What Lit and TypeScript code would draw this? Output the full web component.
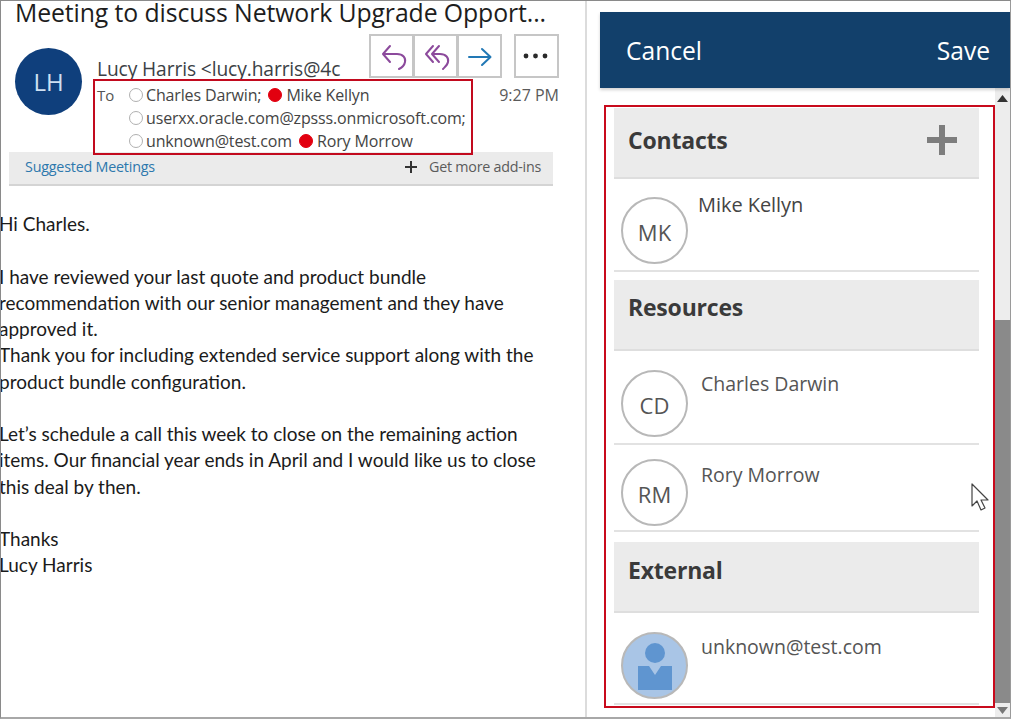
import { LitElement, html, css, svg } from "lit";
import { customElement } from "lit/decorators.js";

const replyIcon = svg`<path d="M19 10 L12 18 L19 26 M12 18 H26 C32 18 35 22 34 26 C33.5 29 31 31.5 28 33"/>`;
const replyAllIcon = svg`<path d="M18 10 L11 18 L18 26 M24 10 L17 18 L24 26 M17 18 H25 C31 18 34 22 33 26 C32.5 29 30 31 28 33"/>`;
const forwardIcon = svg`<path d="M10 21 H31 M23 13 L31.5 21 L23 29"/>`;

@customElement("app-root")
export class AppRoot extends LitElement {
  static styles = css`
    :host { display: block; width: 1015px; height: 722px; background: #fff; overflow: hidden; font-family: "Open Sans", "Noto Sans", sans-serif; color: #333; }
    .frame { position: relative; box-sizing: border-box; width: 1011px; height: 719px; border-top: 1px solid #8a8a8a; border-left: 1px solid #8a8a8a; border-right: 1px solid #9a9a9a; border-bottom: 2px solid #a8a8a8; display: flex; overflow: hidden; background: #fff; }
    .left { width: 584px; flex: none; height: 100%; border-right: 2px solid #dcdcdc; overflow: hidden; }
    .title { height: 33px; margin: 0 0 0 14px; font-size: 24.8px; line-height: 22px; color: #1d1d1d; white-space: nowrap; letter-spacing: -0.1px; }
    .head { display: flex; margin-left: 14px; width: 544px; }
    .lh { flex: none; width: 67px; height: 67px; margin-top: 14px; border-radius: 50%; background: #0f3f7c; color: #cfe0f2; font-size: 24px; display: flex; align-items: center; justify-content: center; }
    .head-main { flex: 1; margin-left: 11px; min-width: 0; }
    .sender-row { display: flex; height: 45px; position: relative; }
    .sender { white-space: nowrap; font-size: 19.2px; line-height: 24px; margin: 23px 0 0 4px; height: 22px; color: #3b3f45; letter-spacing: -0.1px; }
    .actions { display: flex; height: 44px; position: absolute; left: 277px; top: 0; }
    .btn { box-sizing: border-box; width: 45px; height: 44px; border: 2px solid #c6c6c6; margin-left: -1px; background: #fff; }
    .btn svg { display: block; width: 41px; height: 40px; overflow: visible; fill: none; stroke-width: 2; stroke-linecap: round; stroke-linejoin: round; }
    .purple svg { stroke: #8c4a9c; }
    .blue svg { stroke: #2278b5; }
    .more { margin-left: 12px; }
    .more svg { fill: #2a2a2a; stroke: none; }
    .to-row { display: flex; align-items: flex-start; justify-content: space-between; }
    .to-box { position: relative; z-index: 1; box-sizing: border-box; width: 380px; height: 76px; border: 2px solid #c20a1e; padding: 3px 0 0 2px; display: grid; grid-template-columns: 32px 1fr; grid-auto-rows: 23px; font-size: 16px; line-height: 23px; color: #444; }
    .to-label { color: #555; font-size: 15px; }
    .rec { display: flex; align-items: center; grid-column: 2; white-space: nowrap; letter-spacing: -0.15px; }
    .dot { flex: none; box-sizing: border-box; width: 14px; height: 14px; border-radius: 50%; margin: 0 3px 2px 0; border: 1.5px solid #b0b0b0; background: #fff; }
    .dot.filled { background: #e2000f; border-color: #e2000f; margin: 0 4px 2px 0; }
    .sep { display: inline-block; width: 7px; }
    .time { font-size: 16px; line-height: 20px; color: #5a5a5a; margin-top: 6px; }
    .addins { margin: -3px 0 0 8px; box-sizing: border-box; width: 544px; height: 34px; background: #ebebeb; border-bottom: 2px solid #d4d4d4; display: flex; align-items: center; justify-content: space-between; padding: 0 12px 3px 16px; font-size: 14.3px; }
    .suggest { color: #2d78ad; letter-spacing: -0.2px; }
    .more-addins { color: #5b5b5b; display: flex; align-items: center; gap: 12px; letter-spacing: -0.25px; }
    .plus-s { width: 12px; height: 12px; display: block; fill: #333; }
    .mail { margin: 25px 0 0 -2px; font-family: "Lato", "Open Sans", sans-serif; font-size: 19px; line-height: 26.25px; color: #1b1b1b; white-space: nowrap; }
    .mail p { margin: 0 0 26.25px; }
    .right { flex: 1; min-width: 0; height: 100%; display: flex; flex-direction: column; padding-top: 11px; box-sizing: border-box; }
    .bar { flex: none; margin-left: 13px; height: 76px; background: #12406b; color: #fff; font-size: 24.6px; display: flex; align-items: center; justify-content: space-between; padding: 0 20px 0 26px; box-shadow: 0 2px 3px rgba(0,0,0,.18); position: relative; z-index: 1; }
    .under { flex: 1; min-height: 0; display: flex; margin-left: 17px; }
    .red-wrap { flex: 1; min-width: 0; padding-top: 17px; }
    .panel { box-sizing: border-box; height: 603px; border: 2px solid #c80a1c; padding: 1px 14px 0 8px; }
    .sec { box-sizing: border-box; height: 71px; background: #ebebeb; border-bottom: 2px solid #dedede; padding: 11px 21px 0 14px; font-size: 23px; font-weight: 700; line-height: 34px; color: #3a3a3a; display: flex; justify-content: space-between; letter-spacing: -0.2px; }
    .sec.first { padding-top: 15px; }
    .sec.gap { margin-top: 8px; padding-top: 10px; }
    .sec.gap2 { margin-top: 10px; }
    .plus { width: 32px; height: 32px; display: block; fill: #7d7d7d; margin-top: 1px; }
    .row { box-sizing: border-box; border-bottom: 2px solid #e2e2e2; display: flex; align-items: flex-start; padding-left: 7px; }
    .av { flex: none; box-sizing: border-box; width: 67px; height: 67px; border-radius: 50%; border: 2px solid #b8b8b8; display: flex; align-items: center; justify-content: center; font-size: 22px; color: #555; padding-top: 2px; }
    .av.person { background: #a9c5e6; padding: 0; }
    .av.person svg { width: 63px; height: 63px; display: block; fill: #5f95d0; }
    .nm { margin-left: 12px; font-size: 19.5px; line-height: 26px; color: #555; white-space: nowrap; }
    .nm.strong { font-size: 20px; color: #444; letter-spacing: -0.05px; }
    .sb { flex: none; width: 15px; background: #ededed; display: flex; flex-direction: column; }
    .arrow { flex: none; height: 14px; display: flex; align-items: center; justify-content: center; }
    .arrow svg { width: 11px; height: 7px; display: block; }
    .space { flex: none; height: 215px; }
    .thumb { flex: 1; background: #8a8a8a; }
    .cursor { position: absolute; left: 968px; top: 481px; width: 20px; height: 30px; fill: #fff; stroke: #444; stroke-width: 1.2; stroke-linejoin: round; }
  `;

  private row(initials: string, name: string, h: number, avTop: number, nameTop: number, nameGap = 12, strong = false) {
    return html`<div class="row" style="height:${h}px;padding-top:${avTop}px">
      <div class="av">${initials}</div>
      <div class="nm ${strong ? "strong" : ""}" style="margin-top:${nameTop}px;margin-left:${nameGap}px">${name}</div>
    </div>`;
  }

  render() {
    return html`
      <div class="frame">
        <section class="left">
          <div class="title">Meeting to discuss Network Upgrade Opport...</div>
          <div class="head">
            <div class="lh">LH</div>
            <div class="head-main">
              <div class="sender-row">
                <div class="sender">Lucy Harris &lt;lucy.harris@4c</div>
                <div class="actions">
                  <div class="btn purple"><svg viewBox="0 0 41 40">${replyIcon}</svg></div>
                  <div class="btn purple"><svg viewBox="0 0 41 40">${replyAllIcon}</svg></div>
                  <div class="btn blue"><svg viewBox="0 0 41 40">${forwardIcon}</svg></div>
                  <div class="btn more"><svg viewBox="0 0 41 40"><circle cx="10" cy="20" r="2.4"/><circle cx="19.5" cy="20" r="2.4"/><circle cx="29" cy="20" r="2.4"/></svg></div>
                </div>
              </div>
              <div class="to-row">
                <div class="to-box">
                  <div class="to-label">To</div>
                  <div class="rec" style="grid-column:2"><span class="dot"></span>Charles Darwin;<span class="sep"></span><span class="dot filled"></span>Mike Kellyn</div>
                  <div class="rec"><span class="dot"></span>userxx.oracle.com@zpsss.onmicrosoft.com;</div>
                  <div class="rec"><span class="dot"></span>unknown@test.com<span class="sep"></span><span class="dot filled"></span>Rory Morrow</div>
                </div>
                <div class="time">9:27 PM</div>
              </div>
            </div>
          </div>
          <div class="addins">
            <span class="suggest">Suggested Meetings</span>
            <span class="more-addins"><svg class="plus-s" viewBox="0 0 12 12"><path d="M5 0h2v5h5v2H7v5H5V7H0V5h5z"/></svg>Get more add-ins</span>
          </div>
          <div class="mail">
            <p>Hi Charles.</p>
            <p>I have reviewed your last quote and product bundle<br>recommendation with our senior management and they have<br>approved it.<br>Thank you for including extended service support along with the<br>product bundle configuration.</p>
            <p>Let’s schedule a call this week to close on the remaining action<br>items. Our financial year ends in April and I would like us to close<br>this deal by then.</p>
            <p>Thanks<br>Lucy Harris</p>
          </div>
        </section>
        <section class="right">
          <header class="bar"><span>Cancel</span><span>Save</span></header>
          <div class="under">
            <div class="red-wrap">
              <div class="panel">
                <div class="sec first">Contacts<svg class="plus" viewBox="0 0 32 32"><path d="M13 1h6v12h12v6H19v12h-6V19H1v-6h12z"/></svg></div>
                ${this.row("MK", "Mike Kellyn", 93, 18, -5, 10, true)}
                <div class="sec gap">Resources</div>
                ${this.row("CD", "Charles Darwin", 94, 19, 1, 13)}
                ${this.row("RM", "Rory Morrow", 87, 14, 3, 13)}
                <div class="sec gap2">External</div>
                <div class="row" style="height:92px;padding-top:19px">
                  <div class="av person"><svg viewBox="0 0 63 63"><circle cx="32" cy="19" r="10"/><path d="M15 32h11l6 9 6-9h11v24H15z"/></svg></div>
                  <div class="nm" style="margin-top:2px;margin-left:13px">unknown@test.com</div>
                </div>
              </div>
            </div>
            <div class="sb">
              <div class="arrow" style="margin-top:3px"><svg viewBox="0 0 11 7"><path d="M5.5 0L11 7H0z" fill="#333"/></svg></div>
              <div class="space"></div>
              <div class="thumb"></div>
              <div class="arrow"><svg viewBox="0 0 11 7"><path d="M0 0h11L5.5 7z" fill="#777"/></svg></div>
            </div>
          </div>
        </section>
        <svg class="cursor" viewBox="0 0 20 30"><path d="M3 2v22l5-5 4 9 4-2-4-8h7z"/></svg>
      </div>
    `;
  }
}
